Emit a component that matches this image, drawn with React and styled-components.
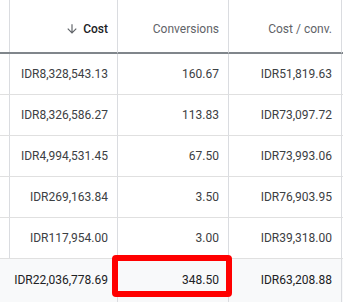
import React from 'react';
import styled, { createGlobalStyle } from "styled-components";

const rows = [
    ["IDR8,328,543.13", "160.67", "IDR51,819.63"],
    ["IDR8,326,586.27", "113.83", "IDR73,097.72"],
    ["IDR4,994,531.45", "67.50", "IDR73,993.06"],
    ["IDR269,163.84", "3.50", "IDR76,903.95"],
    ["IDR117,954.00", "3.00", "IDR39,318.00"],
];

const total = ["IDR22,036,778.69", "348.50", "IDR63,208.88"];

function App() {
    return (
        <>
            <GlobalStyle />
            <Table>
                <HeaderCell />
                <HeaderCell $sorted>
                    <ArrowIcon viewBox="0 0 24 24">
                        <path d="M20 12l-1.41-1.41L13 16.17V4h-2v12.17l-5.58-5.59L4 12l8 8 8-8z" />
                    </ArrowIcon>
                    Cost
                </HeaderCell>
                <HeaderCell>Conversions</HeaderCell>
                <HeaderCell>Cost / conv.</HeaderCell>
                <HeaderCell $last />

                {rows.map((r, i) => (
                    <React.Fragment key={i}>
                        <Cell />
                        <Cell>{r[0]}</Cell>
                        <Cell>{r[1]}</Cell>
                        <Cell>{r[2]}</Cell>
                        <Cell $last />
                    </React.Fragment>
                ))}

                <TotalCell />
                <TotalCell>{total[0]}</TotalCell>
                <TotalCell>
                    {total[1]}
                    <Highlight />
                </TotalCell>
                <TotalCell>{total[2]}</TotalCell>
                <TotalCell $last />
            </Table>
        </>
    );
}

export default App;

const GlobalStyle = createGlobalStyle`
    html, body {
        margin: 0;
        padding: 0;
        background: #ffffff;
    }
    body {
        font-family: Roboto, "Liberation Sans", Arial, sans-serif;
        width: 343px;
        height: 304px;
        overflow: hidden;
    }
`;

const Table = styled.div`
    display: grid;
    grid-template-columns: 4px 114px 111px 113px 1fr;
    grid-template-rows: 54px repeat(5, 41px) 43px;
    width: 343px;
`;

const HeaderCell = styled.div`
    box-sizing: border-box;
    display: flex;
    align-items: center;
    justify-content: flex-end;
    padding: 6px 9px 0 0;
    border-right: ${p => (p.$last ? "none" : "1px solid #dadce0")};
    border-bottom: 2px solid #80868b;
    font-size: 12px;
    font-weight: ${p => (p.$sorted ? 500 : 400)};
    color: ${p => (p.$sorted ? "#202124" : "#5f6368")};
    white-space: nowrap;
`;

const ArrowIcon = styled.svg`
    width: 14px;
    height: 14px;
    margin-right: 4px;
    fill: #5f6368;
`;

const Cell = styled.div`
    box-sizing: border-box;
    display: flex;
    align-items: center;
    justify-content: flex-end;
    padding-right: 9px;
    border-right: ${p => (p.$last ? "none" : "1px solid #dadce0")};
    border-bottom: 1px solid #e0e0e0;
    font-size: 12px;
    color: #3c4043;
    white-space: nowrap;
`;

const TotalCell = styled(Cell)`
    position: relative;
    background: #f8f9fa;
    border-bottom: none;
    padding-bottom: 2px;
    color: #202124;
`;

const Highlight = styled.div`
    position: absolute;
    z-index: 1;
    top: -4px;
    left: -6px;
    right: -4px;
    bottom: 5px;
    border: 6px solid #ff0000;
    border-radius: 4px;
    pointer-events: none;
`;
